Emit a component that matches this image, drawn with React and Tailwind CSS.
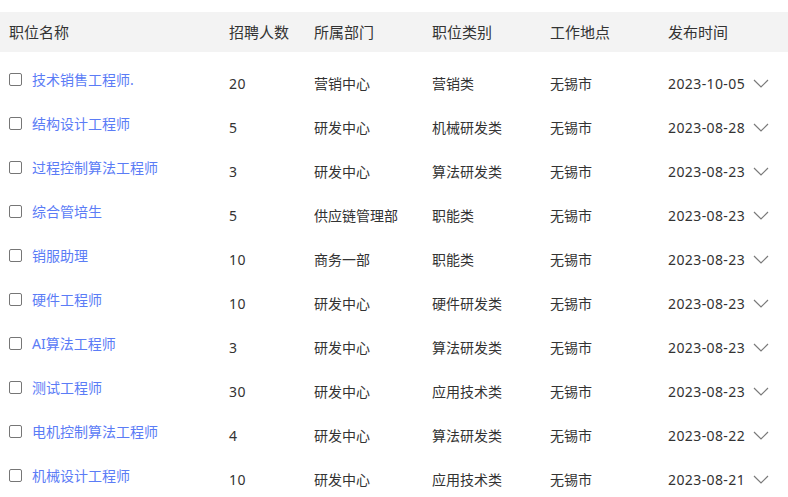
const jobs = [
  ["技术销售工程师.", "20", "营销中心", "营销类", "无锡市", "2023-10-05"],
  ["结构设计工程师", "5", "研发中心", "机械研发类", "无锡市", "2023-08-28"],
  ["过程控制算法工程师", "3", "研发中心", "算法研发类", "无锡市", "2023-08-23"],
  ["综合管培生", "5", "供应链管理部", "职能类", "无锡市", "2023-08-23"],
  ["销服助理", "10", "商务一部", "职能类", "无锡市", "2023-08-23"],
  ["硬件工程师", "10", "研发中心", "硬件研发类", "无锡市", "2023-08-23"],
  ["AI算法工程师", "3", "研发中心", "算法研发类", "无锡市", "2023-08-23"],
  ["测试工程师", "30", "研发中心", "应用技术类", "无锡市", "2023-08-23"],
  ["电机控制算法工程师", "4", "研发中心", "算法研发类", "无锡市", "2023-08-22"],
  ["机械设计工程师", "10", "研发中心", "应用技术类", "无锡市", "2023-08-21"],
];

const cols = "grid grid-cols-[220px_85px_118px_118px_118px_1fr]";

function Chevron() {
  return (
    <svg width="16" height="9" viewBox="0 0 16 9" className="ml-2 text-[#7a7a7a]">
      <path d="M1 1 L8 8 L15 1" fill="none" stroke="currentColor" strokeWidth="1.2" />
    </svg>
  );
}

export default function App() {
  return (
    <div className="h-[497px] w-[788px] overflow-hidden bg-white pt-3 text-[#333] [font-family:'Noto_Sans','Noto_Sans_CJK_SC',sans-serif]">
      <div className={`${cols} h-10 items-center bg-[#f3f3f3] pl-[9px] text-[15px]`}>
        <div>职位名称</div>
        <div>招聘人数</div>
        <div>所属部门</div>
        <div>职位类别</div>
        <div>工作地点</div>
        <div>发布时间</div>
      </div>

      <div className="pt-[9px]">
        {jobs.map(([name, count, dept, type, city, date]) => (
          <div key={name} className={`${cols} h-11 items-center pl-[9px] text-[14px]`}>
            <div className="flex items-center gap-[10px] pb-2">
              <span className="h-[13px] w-[13px] rounded-[2px] border border-[#767676] bg-white" />
              <span className="text-[#5b7cf6]">{name}</span>
            </div>
            <div className="tracking-[0.4px]">{count}</div>
            <div>{dept}</div>
            <div>{type}</div>
            <div>{city}</div>
            <div className="flex items-center tracking-[0.4px]">
              {date}
              <Chevron />
            </div>
          </div>
        ))}
      </div>
    </div>
  );
}
